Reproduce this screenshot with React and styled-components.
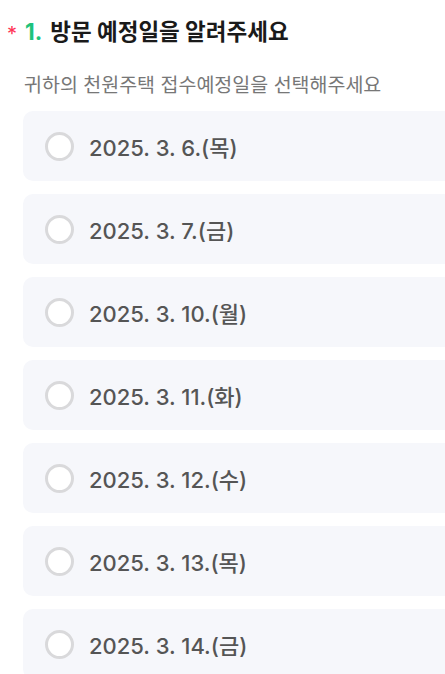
import styled, { createGlobalStyle } from "styled-components";

const GlobalStyle = createGlobalStyle`
    body {
        margin: 0;
        background: #ffffff;
        overflow: hidden;
        font-family: Inter, "Noto Sans CJK KR", sans-serif;
    }
`;

const dates = [
    "2025. 3. 6.(목)",
    "2025. 3. 7.(금)",
    "2025. 3. 10.(월)",
    "2025. 3. 11.(화)",
    "2025. 3. 12.(수)",
    "2025. 3. 13.(목)",
    "2025. 3. 14.(금)",
];

const App = () => {
    return (
        <Container>
            <GlobalStyle />
            <Title>
                <Star>*</Star>
                <Num>1.</Num>
                방문 예정일을 알려주세요
            </Title>
            <Desc>귀하의 천원주택 접수예정일을 선택해주세요</Desc>
            <List>
                {dates.map((d) => (
                    <Option key={d}>
                        <Radio />
                        <Label>{d}</Label>
                    </Option>
                ))}
            </List>
        </Container>
    );
};
export default App;

const Container = styled.div`
    width: 500px;
    padding: 15px 0 0 7px;
`;
const Title = styled.h2`
    display: flex;
    align-items: center;
    margin: 0;
    font-size: 22.5px;
    font-weight: 700;
    color: #1a1a1a;
    letter-spacing: 0;
    line-height: 30px;
`;
const Star = styled.span`
    color: #ff3355;
    font-size: 20px;
    font-weight: 400;
    margin-right: 8px;
    padding-top: 4px;
`;
const Num = styled.span`
    color: #1ec27c;
    margin-right: 8px;
`;
const Desc = styled.p`
    margin: 23px 0 0 17px;
    font-size: 19.5px;
    line-height: 26px;
    color: #777777;
`;
const List = styled.div`
    display: flex;
    flex-direction: column;
    gap: 13px;
    margin: 13px 0 0 16px;
`;
const Option = styled.label`
    display: flex;
    align-items: center;
    height: 70px;
    padding-left: 22px;
    border-radius: 10px;
    background: #f6f7fb;
`;
const Radio = styled.span`
    width: 29px;
    height: 29px;
    box-sizing: border-box;
    border: 3px solid #d9d9db;
    border-radius: 50%;
    background: #ffffff;
    margin-right: 15px;
`;
const Label = styled.span`
    font-size: 22px;
    font-weight: 500;
    color: #555555;
`;
